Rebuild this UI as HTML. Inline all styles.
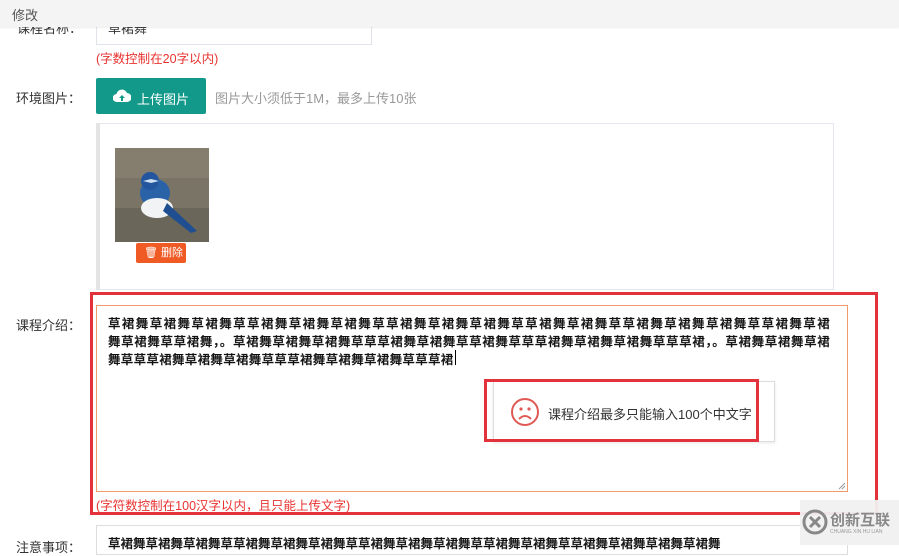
<!DOCTYPE html>
<html><head><meta charset="utf-8"><style>
*{margin:0;padding:0;box-sizing:border-box}
body{width:899px;height:545px;overflow:hidden;background:#fff;font-family:"Liberation Sans","Noto Sans CJK SC",sans-serif;font-size:13px;color:#333;position:relative}
.a{position:absolute}
.hdr{left:0;top:0;width:899px;height:27px;background:#f4f4f4;box-shadow:0 1px 2px rgba(0,0,0,.08);z-index:5}
.hdr span{position:absolute;left:12px;top:5px;font-size:13px;color:#555}
.lbl{font-size:13px;color:#333}
.red{color:#e8322f;font-size:12.5px}
.line{position:absolute;left:108px;width:722px;white-space:nowrap;text-align:justify;text-align-last:justify;font-size:12.5px;color:#111;font-weight:500;letter-spacing:.3px;-webkit-text-stroke:.2px #111}
</style></head><body>
<div class="a hdr"><span>修改</span></div>
<div class="a lbl" style="left:17px;top:18px">课程名称：</div>
<div class="a" style="left:96px;top:12px;width:276px;height:33px;border:1px solid #e0e4ea;background:#fff"></div>
<div class="a" style="left:108px;top:18px;font-size:13px">草裙舞</div>
<div class="a red" style="left:96px;top:48px">(字数控制在20字以内)</div>
<div class="a lbl" style="left:16px;top:88px">环境图片：</div>
<div class="a" style="left:96px;top:78px;width:110px;height:36px;background:#12998a;border-radius:2px;color:#fff;font-size:13px">
<svg class="a" style="left:17px;top:11px" width="18" height="14" viewBox="0 0 18 14"><path d="M4 13a4 4 0 0 1-.5-8A5.5 5.5 0 0 1 14 4a4.5 4.5 0 0 1 0 9z" fill="#fff"/><path d="M9 6l-3 3h2v3h2V9h2z" fill="#12998a"/></svg>
<span class="a" style="left:41px;top:11px">上传图片</span></div>
<div class="a" style="left:215px;top:88px;color:#999;font-size:13px">图片大小须低于1M，最多上传10张</div>
<div class="a" style="left:96px;top:123px;width:738px;height:167px;border:1px solid #e4e7ed;border-left:4px solid #e4e4e4;background:#fff"></div>
<svg class="a" style="left:115px;top:148px" width="94" height="94" viewBox="0 0 94 94">
<rect width="94" height="94" fill="#7a7466"/>
<rect y="0" width="94" height="30" fill="#8a8373" opacity=".7"/>
<rect y="60" width="94" height="34" fill="#6b665a"/>
<ellipse cx="40" cy="45" rx="15" ry="14" fill="#2a62a8"/>
<ellipse cx="42" cy="60" rx="16" ry="10" fill="#f1f3f5"/>
<circle cx="35" cy="33" r="9" fill="#2456a0"/>
<path d="M52 55l30 28-6 2-28-22z" fill="#1f4f90"/>
<path d="M28 33l8-2 8 2-8 2z" fill="#cfe0f0"/>
</svg>
<div class="a" style="left:136px;top:243px;width:50px;height:20px;background:#f05a24;border-radius:2px;color:#fff;font-size:11px;line-height:20px;padding-left:8px">🗑&nbsp;删除</div>

<div class="a" style="left:90px;top:292px;width:788px;height:223px;border:3px solid #e2323b"></div>
<div class="a lbl" style="left:16px;top:315px">课程介绍：</div>
<div class="a" style="left:96px;top:305px;width:752px;height:187px;border:1px solid #f19a6c;background:#fff"></div>
<div class="line" style="top:313px">草裙舞草裙舞草裙舞草草裙舞草裙舞草裙舞草草裙舞草裙舞草裙舞草草裙舞草裙舞草草裙舞草裙舞草裙舞草草裙舞草裙</div>
<div class="line" style="top:331px">舞草裙舞草草裙舞，。草裙舞草裙舞草裙舞草草草裙舞草裙舞草草裙舞草草草裙舞草裙舞草裙舞草草草裙，。草裙舞草裙舞草裙</div>
<div class="a" style="left:108px;top:349px;white-space:nowrap;font-size:12.5px;font-weight:500;color:#111;letter-spacing:.3px;-webkit-text-stroke:.2px #111">舞草草草裙舞草裙舞草裙舞草草草裙舞草裙舞草裙舞草草草裙</div>
<div class="a" style="left:455px;top:350px;width:1px;height:15px;background:#000"></div>
<svg class="a" style="left:838px;top:482px" width="8" height="8"><path d="M1 7L7 1M4 7L7 4" stroke="#999"/></svg>
<div class="a" style="left:493px;top:381px;width:282px;height:61px;border:1px solid #ddd;background:#fff;box-shadow:0 1px 3px rgba(0,0,0,.1)"></div>
<div class="a" style="left:484px;top:379px;width:275px;height:63px;border:3px solid #e2323b"></div>
<svg class="a" style="left:510px;top:397px" width="30" height="30" viewBox="0 0 30 30"><circle cx="15" cy="15" r="13" fill="none" stroke="#e05a55" stroke-width="2"/><circle cx="11" cy="12" r="1.6" fill="#e05a55"/><circle cx="19" cy="12" r="1.6" fill="#e05a55"/><path d="M9 22q6-6 12 0" fill="none" stroke="#e05a55" stroke-width="2"/></svg>
<div class="a" style="left:548px;top:404px;font-size:13px;color:#333">课程介绍最多只能输入100个中文字</div>
<div class="a red" style="left:96px;top:495px">(字符数控制在100汉字以内，且只能上传文字)</div>
<div class="a lbl" style="left:16px;top:537px">注意事项：</div>
<div class="a" style="left:96px;top:525px;width:752px;height:30px;border:1px solid #ddd"></div>
<div class="a" style="left:108px;top:533px;white-space:nowrap;font-size:12.5px;font-weight:500;color:#111;-webkit-text-stroke:.2px #111">草裙舞草裙舞草裙舞草草裙舞草裙舞草裙舞草草裙舞草裙舞草裙舞草草裙舞草裙舞草草裙舞草裙舞草裙舞草裙舞</div>
<div class="a" style="left:800px;top:500px;width:99px;height:45px;background:rgba(240,240,240,.95)"></div>
<svg class="a" style="left:802px;top:509px" width="26" height="26" viewBox="0 0 26 26"><circle cx="13" cy="13" r="11" fill="none" stroke="#888" stroke-width="3"/><path d="M8 8l10 10M18 8l-10 10" stroke="#888" stroke-width="3"/></svg>
<div class="a" style="left:830px;top:509px;font-size:15px;color:#888;font-weight:bold">创新互联</div>
<div class="a" style="left:830px;top:529px;font-size:5px;color:#999">CHUANG XIN HU LIAN</div>
</body></html>
